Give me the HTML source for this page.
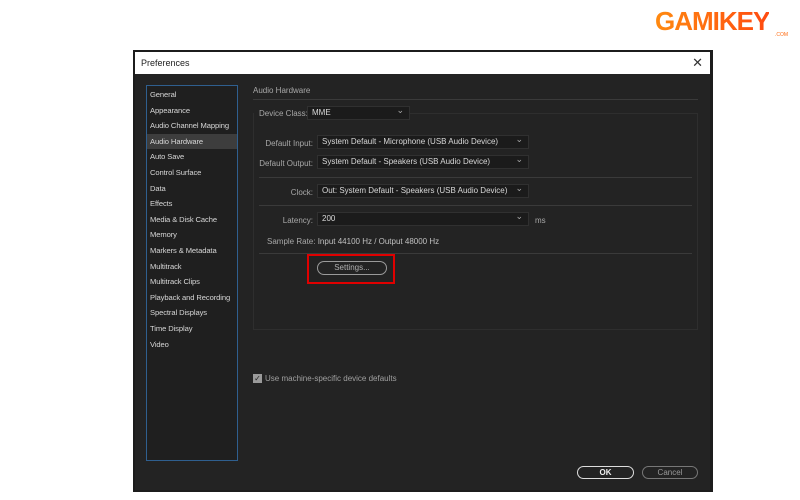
<!DOCTYPE html>
<html><head><style>
*{margin:0;padding:0;box-sizing:border-box}
body{width:800px;height:500px;background:#fff;position:relative;overflow:hidden;font-family:"Liberation Sans",sans-serif;font-size:8px;color:#b8b8b8}
.a{position:absolute;white-space:nowrap}
.dd{position:absolute;background:#1b1b1b;border:1px solid #303030;color:#d8d8d8;padding-left:4px;line-height:12px;font-size:8px}
.dd:after{content:"⌄";position:absolute;right:5px;top:-3px;color:#aaa;font-size:9px}
.lbl{position:absolute;text-align:right;color:#a8a8a8;font-size:8px}
.sep{position:absolute;height:1px;background:#3a3a3a}
.side div{height:15.6px;line-height:15.6px;padding-left:3px;color:#d6d6d6;font-size:7.6px;letter-spacing:-0.1px;white-space:nowrap}
</style></head><body>
<div class="a" style="left:655px;top:6px;font:900 26px 'Liberation Sans',sans-serif;color:#ff6a10;letter-spacing:-1px;background:linear-gradient(90deg,#ff8a10,#ff4a10);-webkit-background-clip:text;background-clip:text;-webkit-text-fill-color:transparent">GAMIKEY</div>
<div class="a" style="left:775px;top:32px;font-size:5px;color:#ff6a10">.COM</div>
<div class="a" style="left:133px;top:50px;width:580px;height:442px;background:#1c1c1c"></div>
<div class="a" style="left:135px;top:52px;width:575px;height:22px;background:#fff;color:#222;font-size:9px;line-height:22px;padding-left:6px">Preferences<span style="position:absolute;right:7px;top:0;font-size:13px;color:#333">✕</span></div>
<div class="a" style="left:135px;top:74px;width:575px;height:416px;background:#232323"></div>
<div class="a side" style="left:146px;top:85px;width:92px;height:376px;border:1px solid #2f5f8f;background:#1f1f1f;padding-top:1px">
<div>General</div><div>Appearance</div><div>Audio Channel Mapping</div><div style="background:#3d3d3d">Audio Hardware</div><div>Auto Save</div><div>Control Surface</div><div>Data</div><div>Effects</div><div>Media &amp; Disk Cache</div><div>Memory</div><div>Markers &amp; Metadata</div><div>Multitrack</div><div>Multitrack Clips</div><div>Playback and Recording</div><div>Spectral Displays</div><div>Time Display</div><div>Video</div></div>
<div class="a" style="left:253px;top:86px;color:#a8a8a8">Audio Hardware</div>
<div class="sep" style="left:253px;top:99px;width:445px"></div>
<div class="a" style="left:253px;top:113px;width:445px;height:217px;border:1px solid #2e2e2e;border-top:none"></div>
<div class="sep" style="left:410px;top:113px;width:288px;background:#2e2e2e"></div>
<div class="lbl" style="left:259px;top:109px">Device Class:</div>
<div class="dd" style="left:307px;top:106px;width:103px;height:14px">MME</div>
<div class="lbl" style="left:258px;top:139px;width:55px">Default Input:</div>
<div class="dd" style="left:317px;top:135px;width:212px;height:14px">System Default - Microphone (USB Audio Device)</div>
<div class="lbl" style="left:258px;top:159px;width:55px">Default Output:</div>
<div class="dd" style="left:317px;top:155px;width:212px;height:14px">System Default - Speakers (USB Audio Device)</div>
<div class="sep" style="left:259px;top:177px;width:433px"></div>
<div class="lbl" style="left:258px;top:188px;width:55px">Clock:</div>
<div class="dd" style="left:317px;top:184px;width:212px;height:14px">Out: System Default - Speakers (USB Audio Device)</div>
<div class="sep" style="left:259px;top:205px;width:433px"></div>
<div class="lbl" style="left:258px;top:216px;width:55px">Latency:</div>
<div class="dd" style="left:317px;top:212px;width:212px;height:14px">200</div>
<div class="a" style="left:535px;top:216px;color:#a8a8a8">ms</div>
<div class="a" style="left:267px;top:237px;color:#a8a8a8">Sample Rate: <span style="color:#c0c0c0">Input 44100 Hz / Output 48000 Hz</span></div>
<div class="sep" style="left:259px;top:253px;width:433px"></div>
<div class="a" style="left:307px;top:254px;width:88px;height:30px;border:2px solid #e00000"></div>
<div class="a" style="left:317px;top:261px;width:70px;height:14px;border:1px solid #9a9a9a;border-radius:7px;text-align:center;line-height:12px;color:#b0b0b0">Settings...</div>
<div class="a" style="left:253px;top:374px;width:9px;height:9px;background:#9a9a9a;color:#222;font-size:8px;line-height:9px;text-align:center">✓</div>
<div class="a" style="left:265px;top:374px;color:#a0a0a0">Use machine-specific device defaults</div>
<div class="a" style="left:577px;top:466px;width:57px;height:13px;border:1px solid #ddd;border-radius:7px;text-align:center;line-height:11px;color:#eee;font-weight:bold">OK</div>
<div class="a" style="left:642px;top:466px;width:56px;height:13px;border:1px solid #777;border-radius:7px;text-align:center;line-height:11px;color:#999">Cancel</div>
</body></html>
